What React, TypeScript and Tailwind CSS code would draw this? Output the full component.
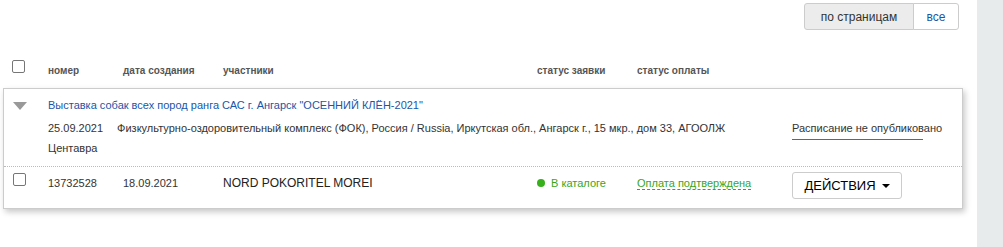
import { useState } from 'react'

const cols = {
  num: 'w-[75px]',
  date: 'w-[100px]',
  who: 'w-[314px]',
  status: 'w-[100px]',
  pay: 'w-[155px]',
}

const Check = () => (
  <span className="block h-[13px] w-[13px] rounded-[2px] border border-[#767676] bg-white" />
)

export default function App() {
  const [mode, setMode] = useState<'pages' | 'all'>('pages')

  return (
    <div className="flex h-[247px] w-[1003px] bg-white font-['Liberation_Sans',Arial,sans-serif] text-[#333]">
      <div className="w-[977px] shrink-0">
        <div className="flex justify-end pr-[18px] pt-[3px]">
          <button
            onClick={() => setMode('pages')}
            className={`h-[27px] w-[110px] rounded-l-[3px] border border-[#ccc] text-[12px] ${
              mode === 'pages' ? 'bg-[#ececec] text-[#333]' : 'bg-white text-[#1a56a8]'
            }`}
          >
            по страницам
          </button>
          <button
            onClick={() => setMode('all')}
            className={`-ml-px h-[27px] w-[46px] rounded-r-[3px] border border-[#ccc] text-[12px] ${
              mode === 'all' ? 'bg-[#ececec] text-[#333]' : 'bg-white text-[#1a56a8]'
            }`}
          >
            все
          </button>
        </div>

        <div className="mt-[33px] flex h-[14px] items-center pl-[12px] text-[10px] font-bold text-[#555]">
          <div className="mt-[-7px] w-[36px]">
            <Check />
          </div>
          <span className={cols.num}>номер</span>
          <span className={cols.date}>дата создания</span>
          <span className={cols.who}>участники</span>
          <span className={cols.status}>статус заявки</span>
          <span className={cols.pay}>статус оплаты</span>
        </div>

        <div className="ml-[3px] mt-[11px] w-[960px] border border-[#ccc] bg-white shadow-[2px_3px_6px_rgba(0,0,0,0.22)]">
          <div className="flex border-b border-dotted border-[#bbb] pb-[8px] pt-[6px]">
            <div className="w-[44px] shrink-0 pl-[9px] pt-[7px]">
              <span className="block h-0 w-0 border-x-[7px] border-t-[8px] border-x-transparent border-t-[#999]" />
            </div>
            <div className="flex-1 text-[11px] leading-[20px]">
              <div className="text-[#1a56a8]">Выставка собак всех пород ранга САС г. Ангарск "ОСЕННИЙ КЛЁН-2021"</div>
              <div className="mt-[3px] flex">
                <p className="mr-[54px] w-[690px] shrink-0">
                  {'25.09.2021\u2003 Физкультурно-оздоровительный комплекс (ФОК), Россия / Russia, Иркутская обл., Ангарск г., 15 мкр., дом 33, АГООЛЖ Центавра'}
                </p>
                <div>
                  <div className="leading-[20px]">Расписание не опубликовано</div>
                  <div className="mt-[1px] h-px w-[131px] bg-[#f0283a]" />
                </div>
              </div>
            </div>
          </div>

          <div className="flex h-[41px] items-start pl-[9px] pt-[6px]">
            <div className="w-[35px]">
              <Check />
            </div>
            <span className={`${cols.num} pt-[2px] text-[11px]`}>13732528</span>
            <span className={`${cols.date} pt-[2px] text-[11px]`}>18.09.2021</span>
            <span className={`${cols.who} pt-[1px] text-[12px] text-[#222]`}>NORD POKORITEL MOREI</span>
            <span className={`${cols.status} flex items-center gap-[6px] pt-[2px] text-[11px] text-[#3aa51b]`}>
              <span className="h-[8px] w-[8px] rounded-full bg-[#38b01c]" />
              В каталоге
            </span>
            <span className={`${cols.pay} pt-[2px] text-[11px] text-[#3aa51b]`}>
              <span className="border-b border-dashed border-[#3aa51b]">Оплата подтверждена</span>
            </span>
            <button className="-mt-[1px] flex h-[27px] w-[110px] items-center justify-center gap-[6px] rounded-[3px] border border-[#ccc] bg-white text-[13px] text-black">
              ДЕЙСТВИЯ
              <span className="mt-[1px] block h-0 w-0 border-x-[4px] border-t-[4px] border-x-transparent border-t-black" />
            </button>
          </div>
        </div>
      </div>
      <div className="flex-1 bg-[#e8ebeb]" />
    </div>
  )
}
